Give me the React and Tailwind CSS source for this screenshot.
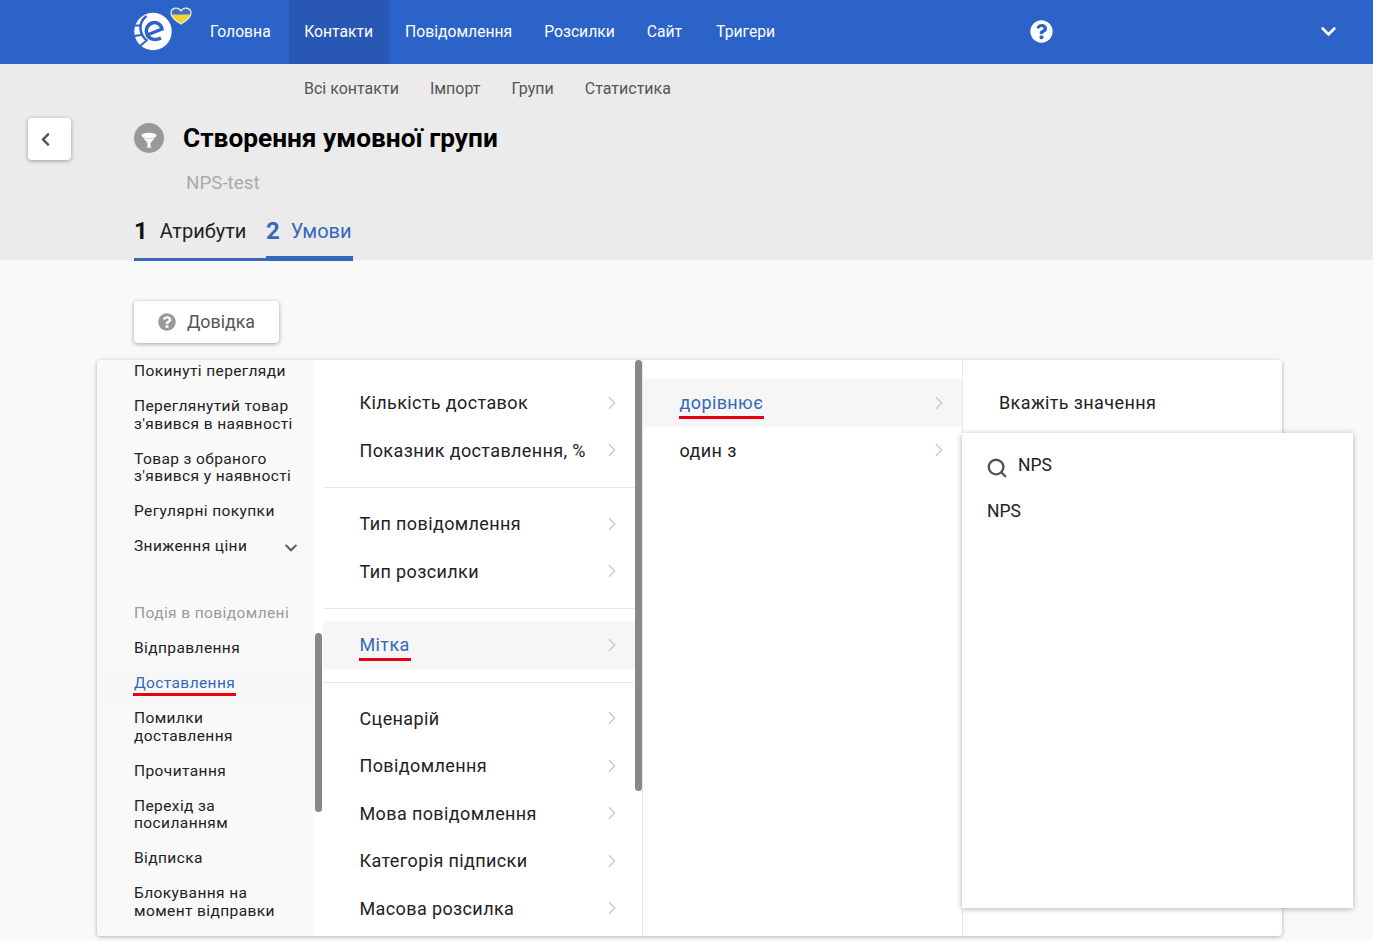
import { ChevronRight, Search } from 'lucide-react';
import { FaChevronDown, FaChevronLeft, FaQuestionCircle } from 'react-icons/fa';

const NAV = ['Головна', 'Контакти', 'Повідомлення', 'Розсилки', 'Сайт', 'Тригери'];
const SUB = ['Всі контакти', 'Імпорт', 'Групи', 'Статистика'];

// Red marker that somebody drew over the screenshot
const Marked = ({ children }) => (
  <span className="relative inline-block text-[#3567bd]">
    {children}
    <span className="absolute -left-px -right-px bottom-[-3px] h-[3px] bg-[#e60012]" />
  </span>
);

const Logo = () => (
  <svg width="60" height="50" viewBox="0 0 60 50" className="shrink-0">
    <circle cx="19" cy="27.500" r="18.700" fill="#fff" />
    <g fill="none" stroke="#2b63c9">
      <path d="M13 31l15-6c-1-5-6-7.500-10-6-5 2-7 7-5 11.500 2 4.500 8 6.500 14 3.500" strokeWidth="3.500" />
      <path d="M12.500 12c-4 3-6.500 8-6 13 .4 5 3 9 7 12" strokeWidth="2.500" />
      <path d="M0 21.500h6M0 32l7-1M6 42l6-5" strokeWidth="2" />
    </g>
    <path d="M47 20c-5-3-10-7-10-11 0-5 7-7 10-2 3-5 10-3 10 2 0 4-5 8-10 11z" fill="#f6d32a" />
    <path d="M37 9c0-5 7-7 10-2 3-5 10-3 10 2l-.5 1.500h-19z" fill="#3d6dcb" />
    <path d="M47 20c-5-3-10-7-10-11 0-5 7-7 10-2 3-5 10-3 10 2 0 4-5 8-10 11z" fill="none" stroke="#e9e6d8" strokeWidth="1.300" />
  </svg>
);

const Funnel = () => (
  <span className="flex h-[30px] w-[30px] items-center justify-center rounded-full bg-[#999]">
    <svg width="30" height="30" viewBox="0 0 30 30" fill="#fff">
      <ellipse cx="15" cy="12.500" rx="7.500" ry="2.700" />
      <path d="M8.500 14c2 2 11 2 13 0l-5 6v3.500l1.500 1h-6l1.500-1V20z" />
    </svg>
  </span>
);

const Item = ({ children }) => (
  <div className="whitespace-nowrap pl-[37px] py-[8.75px] text-[15.5px] leading-[17.5px] tracking-[0.4px] text-[#222]">{children}</div>
);

const Row = ({ label, active, marked }) => (
  <div className={`flex h-[47.5px] items-center justify-between pl-[36.500px] pr-[12px] text-[18px] tracking-[0.38px] text-[#222] ${active ? 'bg-[#f6f6f6]' : ''}`}>
    <span>{marked ? <Marked>{label}</Marked> : label}</span>
    <ChevronRight className="h-[22px] w-[22px] text-[#c4c4c4]" strokeWidth={1.2} />
  </div>
);

export default function App() {
  return (
    <div className="h-[941px] overflow-hidden bg-[#f9f9f9] font-['Roboto',sans-serif]">
      <nav className="flex h-16 items-center bg-[#2b63c9] pl-[134px] pr-[36px] text-white">
        <div className="-mt-[6px] w-[60px]"><Logo /></div>
        <div className="flex h-full">
          {NAV.map((n, i) => (
            <a key={n} className={`flex h-full items-center text-[15.7px] ${i === 1 ? 'ml-[2px] bg-[#2858b3] pl-[15.500px] pr-[16px]' : i === 5 ? 'pl-[18px] pr-4' : 'px-4'}`}>{n}</a>
          ))}
        </div>
        <FaQuestionCircle className="-mt-[2px] ml-[239px] h-[23px] w-[23px]" />
        <FaChevronDown className="-mt-[2px] ml-auto h-[17px] w-[17px]" />
      </nav>

      <header className="h-[196px] bg-[#ebebeb]">
        <div className="flex h-12 items-center gap-[31px] pl-[304px] pt-[1px] text-[16px] text-[#555]">
          {SUB.map((s) => <a key={s}>{s}</a>)}
        </div>
        <div className="relative flex items-center pl-[134px] pt-[8px]">
          <button className="absolute left-[28px] top-[6px] flex h-[42px] w-[43px] items-center justify-center rounded bg-white pr-[8px] text-[#555] shadow-[0_1px_4px_rgba(0,0,0,0.35)]">
            <FaChevronLeft className="h-[15px] w-[15px]" />
          </button>
          <Funnel />
          <h1 className="ml-[19px] text-[26.25px] font-bold leading-[36px] text-black">Створення умовної групи</h1>
        </div>
        <div className="pl-[186px] pt-[15px] text-[18.8px] leading-[24px] text-[#aaa]">NPS-test</div>
        <div className="mt-[16px] flex items-end pl-[134px]">
          <div className="flex h-[50px] w-[132px] items-start border-b-[3px] border-[#3567bd]">
            <b className="mr-[12px] text-[24px] font-bold leading-[40px] text-[#111]">1</b>
            <span className="text-[20px] leading-[40px] text-[#222]">Атрибути</span>
          </div>
          <div className="flex h-[50px] w-[87px] items-start border-b-[5px] border-[#3567bd] text-[#3567bd]">
            <b className="mr-[11px] text-[24px] font-bold leading-[40px]">2</b>
            <span className="text-[20px] leading-[40px]">Умови</span>
          </div>
        </div>
      </header>

      <div className="pl-[134px] pt-[41px]">
        <button className="flex h-[42px] w-[145px] items-center justify-center gap-[11px] rounded bg-white text-[17.8px] text-[#555] shadow-[0_1px_4px_rgba(0,0,0,0.35)]">
          <FaQuestionCircle className="h-[18px] w-[18px] text-[#999]" />
          Довідка
        </button>
      </div>

      <div className="relative ml-[97px] mt-[17px] flex h-[576px] w-[1185px] rounded bg-white shadow-[0_1px_4px_rgba(0,0,0,0.3)]">
        {/* first column, scrolled */}
        <div className="relative w-[226px] shrink-0 overflow-hidden pr-2">
          <div className="h-full overflow-hidden rounded-l bg-[#f9f9f9]">
            <div className="-mt-[5.5px]">
              <Item>Покинуті перегляди</Item>
              <Item>Переглянутий товар<br />з'явився в наявності</Item>
              <Item>Товар з обраного<br />з'явився у наявності</Item>
              <Item>Регулярні покупки</Item>
              <div className="relative">
                <Item>Зниження ціни</Item>
                <FaChevronDown className="absolute left-[187px] top-[11px] h-[14px] w-[14px] text-[#666]" />
              </div>
              <div className="whitespace-nowrap pl-[37px] pb-[8.75px] pt-[40.75px] text-[15.5px] leading-[17.5px] tracking-[0.4px] text-[#999]">Подія в повідомлені</div>
              <Item>Відправлення</Item>
              <div className="ml-[7px] bg-[#f7f7f7] [&>div]:pl-[30px]"><Item><Marked>Доставлення</Marked></Item></div>
              <Item>Помилки<br />доставлення</Item>
              <Item>Прочитання</Item>
              <Item>Перехід за<br />посиланням</Item>
              <Item>Відписка</Item>
              <Item>Блокування на<br />момент відправки</Item>
            </div>
          </div>
          <span className="absolute right-[1px] top-[273px] h-[179px] w-[7px] rounded bg-[#888]" />
        </div>

        {/* second column */}
        <div className="relative w-[320px] shrink-0 overflow-hidden border-r border-[#e8e8e8] pr-[7px]">
          <div className="border-b border-[#e8e8e8] pb-[13px] pt-[19px]">
            <Row label="Кількість доставок" />
            <Row label="Показник доставлення, %" />
          </div>
          <div className="border-b border-[#e8e8e8] pb-[13px] pt-[12px]">
            <Row label="Тип повідомлення" />
            <Row label="Тип розсилки" />
          </div>
          <div className="border-b border-[#e8e8e8] pb-[13.500px] pt-[12px]">
            <Row label="Мітка" active marked />
          </div>
          <div className="pt-[11.250px]">
            <Row label="Сценарій" />
            <Row label="Повідомлення" />
            <Row label="Мова повідомлення" />
            <Row label="Категорія підписки" />
            <Row label="Масова розсилка" />
          </div>
          <span className="absolute right-0 top-0 h-[431px] w-[7px] rounded bg-[#888]" />
        </div>

        {/* third column */}
        <div className="w-[320px] shrink-0 border-r border-[#e8e8e8] pt-[19px]">
          <Row label="дорівнює" active marked />
          <Row label="один з" />
        </div>

        {/* fourth column */}
        <div className="flex-1 pl-[36px] pt-[19px]">
          <div className="flex h-[47.5px] items-center text-[18px] tracking-[0.38px] text-[#222]">Вкажіть значення</div>
        </div>

        {/* value popover */}
        <div className="absolute left-[865px] top-[73px] h-[475px] w-[391px] bg-white pl-[25px] pt-[20px] shadow-[0_1px_6px_rgba(0,0,0,0.3)]">
          <div className="flex items-start">
            <Search className="-ml-[1px] mt-[4px] h-[22px] w-[22px] text-[#555]" strokeWidth={2.6} />
            <span className="ml-[10px] text-[17.5px] leading-[24px] text-[#222]">NPS</span>
          </div>
          <div className="mt-[20px] text-[17.5px] leading-[24px] text-[#222]">NPS</div>
        </div>
      </div>
    </div>
  );
}
